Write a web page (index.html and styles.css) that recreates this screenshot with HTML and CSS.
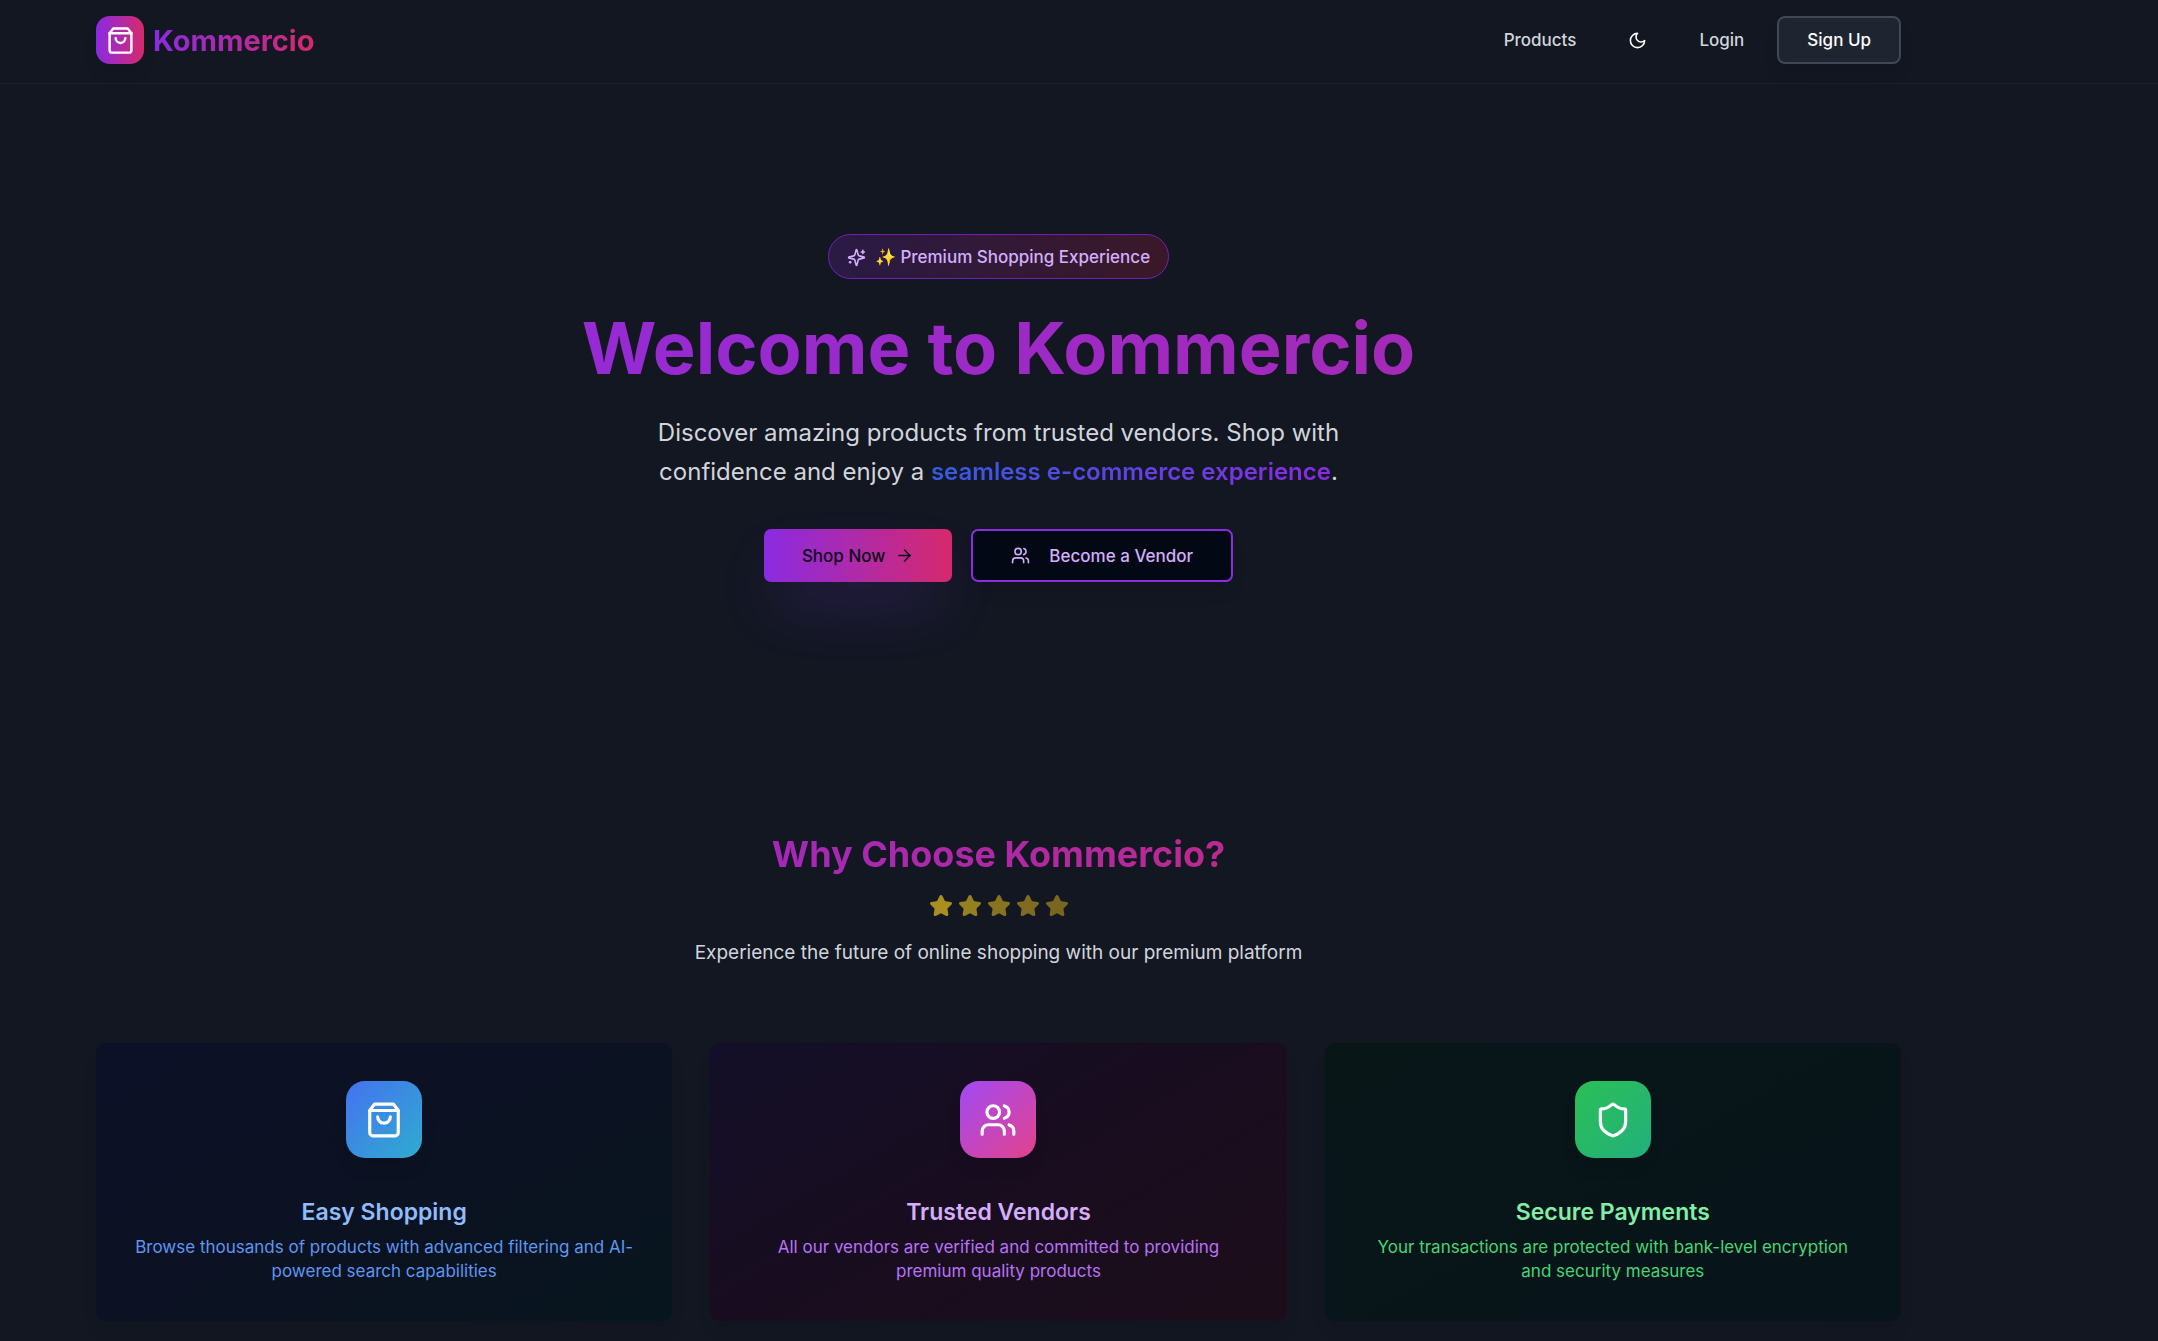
FILE: index.html
```html
<!DOCTYPE html>
<html lang="en">
<head>
<meta charset="utf-8">
<meta name="viewport" content="width=device-width, initial-scale=1">
<title>Kommercio</title>
<link rel="stylesheet" href="styles.css">
</head>
<body>
<svg class="sprite" aria-hidden="true">
  <symbol id="bag" viewBox="0 0 24 24"><path d="M6 2 3 6v14a2 2 0 0 0 2 2h14a2 2 0 0 0 2-2V6l-3-4Z"/><path d="M3 6h18"/><path d="M16 10a4 4 0 0 1-8 0"/></symbol>
  <symbol id="users" viewBox="0 0 24 24"><path d="M16 21v-2a4 4 0 0 0-4-4H6a4 4 0 0 0-4 4v2"/><circle cx="9" cy="7" r="4"/><path d="M22 21v-2a4 4 0 0 0-3-3.87"/><path d="M16 3.13a4 4 0 0 1 0 7.75"/></symbol>
  <symbol id="star" viewBox="0 0 24 24"><path d="M11.525 2.295a.53.53 0 0 1 .95 0l2.31 4.679a2.123 2.123 0 0 0 1.595 1.16l5.166.756a.53.53 0 0 1 .294.904l-3.736 3.638a2.123 2.123 0 0 0-.611 1.878l.882 5.14a.53.53 0 0 1-.771.56l-4.618-2.428a2.122 2.122 0 0 0-1.973 0L6.396 21.01a.53.53 0 0 1-.77-.56l.881-5.139a2.122 2.122 0 0 0-.611-1.879L2.16 9.795a.53.53 0 0 1 .294-.906l5.165-.755a2.122 2.122 0 0 0 1.597-1.16z"/></symbol>
</svg>
<header class="header">
  <div class="container header-row">
    <a class="brand" href="#"><span class="brand-mark"><svg class="icon icon-md"><use href="#bag"/></svg></span><span class="brand-name">Kommercio</span></a>
    <nav class="nav">
      <a class="nav-link" href="#">Products</a>
      <button class="theme" type="button" aria-label="Toggle theme"><svg class="icon" viewBox="0 0 24 24"><path d="M12 3a6 6 0 0 0 9 9 9 9 0 1 1-9-9Z"/></svg></button>
      <a class="nav-link" href="#">Login</a>
      <a class="signup" href="#">Sign Up</a>
    </nav>
  </div>
</header>
<main>
  <section class="container hero">
    <div class="badge"><svg class="icon" viewBox="0 0 24 24"><path d="M9.937 15.5A2 2 0 0 0 8.5 14.063l-6.135-1.582a.5.5 0 0 1 0-.962L8.5 9.936A2 2 0 0 0 9.937 8.5l1.582-6.135a.5.5 0 0 1 .963 0L14.063 8.5A2 2 0 0 0 15.5 9.937l6.135 1.581a.5.5 0 0 1 0 .964L15.5 14.063a2 2 0 0 0-1.437 1.437l-1.582 6.135a.5.5 0 0 1-.963 0z"/><path d="M20 3v4"/><path d="M22 5h-4"/><path d="M4 17v2"/><path d="M5 18H3"/></svg><span>✨ Premium Shopping Experience</span></div>
    <h1 class="title">Welcome to Kommercio</h1>
    <p class="lead">Discover amazing products from trusted vendors. Shop with confidence and enjoy a <span class="lead-accent">seamless e-commerce experience</span>.</p>
    <div class="actions">
      <button class="btn btn-primary" type="button">Shop Now<svg class="icon" viewBox="0 0 24 24"><path d="M5 12h14"/><path d="m12 5 7 7-7 7"/></svg></button>
      <button class="btn btn-outline" type="button"><svg class="icon"><use href="#users"/></svg>Become a Vendor</button>
    </div>
  </section>
  <section class="container features">
    <h2 class="heading">Why Choose Kommercio?</h2>
    <div class="stars" role="img" aria-label="Five stars">
      <svg class="star star-1"><use href="#star"/></svg><svg class="star star-2"><use href="#star"/></svg><svg class="star star-3"><use href="#star"/></svg><svg class="star star-4"><use href="#star"/></svg><svg class="star star-5"><use href="#star"/></svg>
    </div>
    <p class="tagline">Experience the future of online shopping with our premium platform</p>
    <div class="cards">
      <article class="card card-blue"><span class="tile"><svg class="icon icon-lg"><use href="#bag"/></svg></span><h3 class="card-title">Easy Shopping</h3><p class="card-text">Browse thousands of products with advanced filtering and AI-powered search capabilities</p></article>
      <article class="card card-purple"><span class="tile"><svg class="icon icon-lg"><use href="#users"/></svg></span><h3 class="card-title">Trusted Vendors</h3><p class="card-text">All our vendors are verified and committed to providing premium quality products</p></article>
      <article class="card card-green"><span class="tile"><svg class="icon icon-lg" viewBox="0 0 24 24"><path d="M20 13c0 5-3.500 7.500-7.660 8.950a1 1 0 0 1-.67-.010C7.500 20.500 4 18 4 13V6a1 1 0 0 1 1-1c2 0 4.500-1.200 6.240-2.720a1.170 1.170 0 0 1 1.520 0C14.510 3.810 17 5 19 5a1 1 0 0 1 1 1z"/></svg></span><h3 class="card-title">Secure Payments</h3><p class="card-text">Your transactions are protected with bank-level encryption and security measures</p></article>
    </div>
  </section>
</main>
</body>
</html>
```
FILE: styles.css
```css
* { box-sizing: border-box; margin: 0; }
body { background: #131722; color: #d1d5db; font: 400 17px/24px Inter, "Liberation Sans", sans-serif; }
a { color: inherit; text-decoration: none; }
button { font: inherit; color: inherit; border: 0; background: none; cursor: pointer; }
.sprite { position: absolute; width: 0; height: 0; }
.icon { width: 19px; height: 19px; flex: none; fill: none; stroke: currentColor; stroke-width: 2; stroke-linecap: round; stroke-linejoin: round; }
.icon-md { width: 29px; height: 29px; }
.icon-lg { width: 38px; height: 38px; }
.container { max-width: 1997px; padding: 0 96px; }

.header { border-bottom: 1px solid #1a202b; }
.header-row { display: flex; align-items: center; justify-content: space-between; padding-top: 16px; padding-bottom: 19px; }
.brand { display: flex; align-items: center; gap: 9px; }
.brand-mark { display: flex; align-items: center; justify-content: center; width: 48px; height: 48px; border-radius: 14px; color: #fff; background: linear-gradient(90deg, #8a2be2, #d6296c); box-shadow: 0 12px 18px -4px #0000001a; }
.brand-name { padding-top: 1px; font-size: 29px; line-height: 38px; font-weight: 700; color: transparent; background: linear-gradient(90deg, #8a2be2, #d6296c); background-clip: text; }
.nav { display: flex; align-items: center; gap: 19px; font-weight: 500; }
.nav-link { padding: 12px 14px; }
.theme { display: flex; padding: 14px 19px; color: #fff; }
.signup { padding: 10px 28px; border: 2px solid #414855; border-radius: 8px; background: #1f2530; color: #fff; box-shadow: 0 12px 18px -4px #0000001a; }

.hero { display: flex; flex-direction: column; align-items: center; padding-top: 150px; padding-bottom: 96px; text-align: center; }
.badge { display: flex; align-items: center; gap: 9px; padding: 10px 18px 9px; border: 1px solid #7420b8; border-radius: 24px; background: linear-gradient(90deg, #2a1a45, #3a1828); color: #d5aefb; font-weight: 500; }
.title { margin-top: 24px; font-size: 72px; line-height: 90px; font-weight: 700; color: transparent; background: linear-gradient(90deg, #962ad4, #a42ab8); background-clip: text; }
.lead { max-width: 720px; margin-top: 20px; font-size: 24px; line-height: 39px; }
.lead-accent { font-weight: 600; color: transparent; background: linear-gradient(90deg, #355be0, #8a2be2); background-clip: text; }
.actions { display: flex; flex-wrap: wrap; justify-content: center; gap: 19px; margin-top: 38px; }
.btn { display: flex; align-items: center; min-height: 53px; padding: 0 38px; border-radius: 7px; font-weight: 500; }
.btn-primary { gap: 10px; color: #0c0a17; background: linear-gradient(90deg, #8a2be2, #d6296c); box-shadow: 0 30px 60px -14px #7c3aed50; }
.btn-outline { gap: 19px; border: 2px solid #8b2be2; background: #030914; color: #d5aefb; box-shadow: 0 12px 18px -4px #0000001a; }

.features { padding-top: 154px; padding-bottom: 20px; text-align: center; }
.heading { width: fit-content; margin: 0 auto; font-size: 36px; line-height: 44px; font-weight: 700; color: transparent; background: linear-gradient(90deg, #a428b8, #ba2a90); background-clip: text; }
.stars { display: flex; justify-content: center; gap: 5px; margin-top: 18px; }
.star { width: 24px; height: 24px; fill: currentColor; stroke: currentColor; stroke-width: 2; stroke-linejoin: round; }
.star-1 { color: #a98f1f; }
.star-2 { color: #958020; }
.star-3 { color: #88741f; }
.star-4 { color: #7f6c20; }
.star-5 { color: #796720; }
.tagline { margin-top: 20px; font-size: 19px; line-height: 29px; }
.cards { display: grid; grid-template-columns: repeat(3, 1fr); gap: 38px; margin-top: 76px; }
.card { display: flex; flex-direction: column; align-items: center; padding: 38px; border-radius: 9px; box-shadow: 0 12px 18px -4px #0000001a; }
.tile { display: flex; align-items: center; justify-content: center; width: 76px; height: 77px; border-radius: 19px; color: #fff; box-shadow: 0 12px 18px -4px #0000001a; }
.card-title { margin-top: 42px; font-size: 23px; line-height: 24px; font-weight: 600; }
.card-text { margin-top: 11px; }
.card-blue { background: linear-gradient(150deg, #0d1128, #0b1221 60%, #07161e); color: #5e96f2; }
.card-blue .card-title { color: #90bcfa; }
.card-blue .tile { background: linear-gradient(135deg, #4572f0, #2eaccf); }
.card-purple { background: linear-gradient(150deg, #130f28, #180d20 45%, #1c0d19); color: #b872f5; }
.card-purple .card-title { color: #d5aefb; }
.card-purple .tile { background: linear-gradient(135deg, #a14af4, #e4428c); }
.card-green { background: linear-gradient(150deg, #081618, #07151b); color: #47d475; }
.card-green .card-title { color: #82eda6; }
.card-green .tile { background: linear-gradient(135deg, #2bbf56, #22b07c); }
@media (max-width: 1000px) {
  .container { padding-left: 24px; padding-right: 24px; }
  .cards { grid-template-columns: 1fr; }
}
```
